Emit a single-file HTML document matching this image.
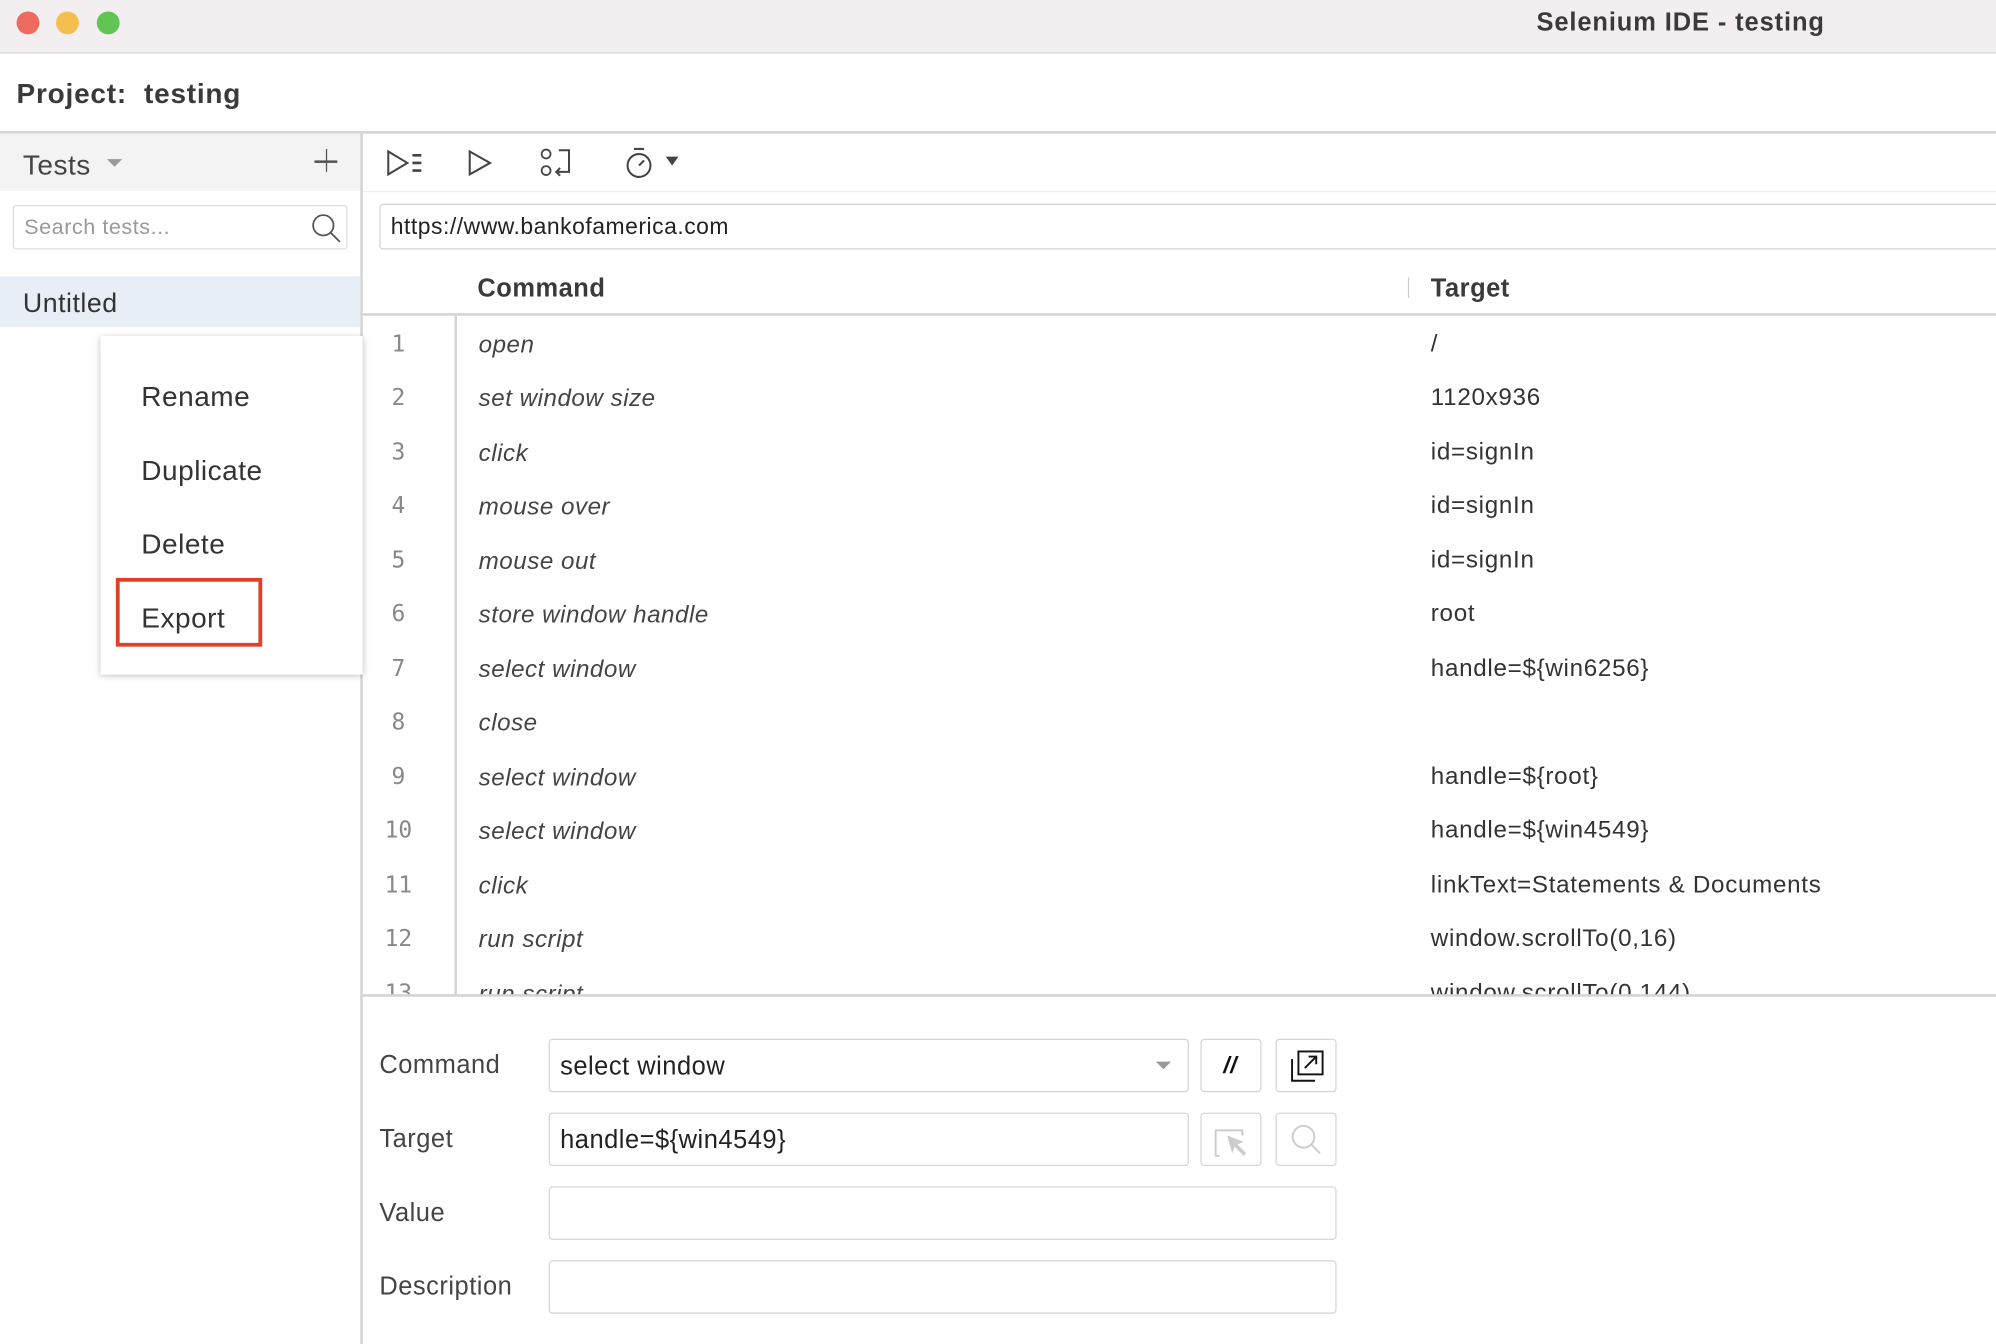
<!DOCTYPE html>
<html><head><meta charset="utf-8"><style>
html,body{margin:0;padding:0;width:1996px;height:1344px;overflow:hidden;background:#fff}
#w{position:absolute;left:0;top:0;width:1568px;height:1056px;transform:scale(1.27296);transform-origin:0 0;font-family:"Liberation Sans",sans-serif;color:#333;letter-spacing:0.4px}
.a{position:absolute}
.row{position:absolute;left:284px;width:1284px;height:42.5px;font-size:19px}
.row .n{position:absolute;left:0;width:58px;text-align:center;font-family:"DejaVu Sans Mono","Liberation Mono",monospace;color:#888;font-size:18px;top:11px;letter-spacing:0}
.row .c{position:absolute;left:92px;font-style:italic;top:12px;color:#444}
.row .t{position:absolute;left:840px;top:11px;color:#333;letter-spacing:0.55px}
.lbl{position:absolute;left:298px;font-size:20px;color:#444}
.inp{position:absolute;border:1.5px solid #d6d6d6;border-radius:3px;box-sizing:border-box;background:#fff;font-size:20px;padding:10px 8px 8px;color:#222}
.btn{position:absolute;border:1.5px solid #d6d6d6;border-radius:3px;box-sizing:border-box;width:48px;height:42px}
.mi{position:absolute;left:32px;font-size:22px;color:#333}
</style></head><body><div id="w">
<div class="a" style="left:0;top:0;width:1568px;height:41px;background:#f3eff1;border-bottom:1px solid #d8d4d6"></div>
<div class="a" style="left:13px;top:9px;width:18px;height:18px;border-radius:50%;background:#ec6a5e"></div>
<div class="a" style="left:44px;top:9px;width:18px;height:18px;border-radius:50%;background:#f4bf4f"></div>
<div class="a" style="left:76px;top:9px;width:18px;height:18px;border-radius:50%;background:#61c554"></div>
<div class="a" style="left:1207px;top:7px;font-size:20px;font-weight:bold;color:#3a3a3a;letter-spacing:0.7px">Selenium IDE - testing</div>
<div class="a" style="left:13px;top:61px;font-size:22px;font-weight:bold;color:#3a3a3a;letter-spacing:0.6px">Project:&nbsp; testing</div>
<div class="a" style="left:0;top:103px;width:1568px;height:2px;background:#d4d4d4"></div>
<div class="a" style="left:0;top:105px;width:283px;height:45px;background:#f3f3f3"></div>
<div class="a" style="left:283px;top:105px;width:2px;height:951px;background:#d4d4d4"></div>
<div class="a" style="left:18px;top:117px;font-size:22px;color:#444">Tests</div>
<div class="a" style="left:84px;top:125px;width:0;height:0;border-left:6px solid transparent;border-right:6px solid transparent;border-top:6px solid #999"></div>
<div class="a" style="left:247px;top:126px;width:18px;height:1.5px;background:#555"></div>
<div class="a" style="left:255.5px;top:117px;width:1.5px;height:18px;background:#555"></div>
<div class="a" style="left:10px;top:161px;width:263px;height:35px;border:1.5px solid #ddd;border-radius:3px;box-sizing:border-box"></div>
<div class="a" style="left:19px;top:169px;font-size:17px;color:#999">Search tests...</div>
<svg class="a" style="left:243px;top:166px" width="26" height="26" viewBox="0 0 26 26"><circle cx="11" cy="11" r="8" fill="none" stroke="#555" stroke-width="1.4"/><line x1="17" y1="17" x2="24" y2="24" stroke="#555" stroke-width="1.4"/></svg>
<div class="a" style="left:0;top:217px;width:283px;height:40px;background:#e8eef6"></div>
<div class="a" style="left:18px;top:227px;font-size:21px;color:#333">Untitled</div>
<div class="a" style="left:285px;top:150px;width:1283px;height:1px;background:#eee"></div>
<svg class="a" style="left:300px;top:114px" width="260" height="28" viewBox="0 0 260 28">
<path d="M5 5 L5 23 L20 14 Z" fill="none" stroke="#444" stroke-width="1.6"/><path d="M24 8h7M24 14h7M24 20h7" stroke="#444" stroke-width="2"/>
<path d="M69 5 L69 23 L85 14 Z" fill="none" stroke="#444" stroke-width="1.6"/>
<circle cx="129" cy="7" r="3.5" fill="none" stroke="#444" stroke-width="1.4"/><circle cx="129" cy="20" r="3.5" fill="none" stroke="#444" stroke-width="1.4"/>
<path d="M139 4h8v17h-10M140 18l-3 3 3 3" fill="none" stroke="#444" stroke-width="1.6"/>
<circle cx="202" cy="16" r="9" fill="none" stroke="#444" stroke-width="1.6"/><path d="M198 3h8M202 16l4-4" stroke="#444" stroke-width="1.6"/>
<path d="M223 9h10l-5 7z" fill="#444"/></svg>
<div class="inp" style="left:298px;top:160px;width:1280px;height:36px;font-size:18px;padding:7px 8px">https://www.bankofamerica.com</div>
<div class="a" style="left:375px;top:216px;font-size:20px;font-weight:bold;color:#3a3a3a">Command</div>
<div class="a" style="left:1106px;top:218px;width:1px;height:16px;background:#ccc"></div>
<div class="a" style="left:1124px;top:216px;font-size:20px;font-weight:bold;color:#3a3a3a">Target</div>
<div class="a" style="left:285px;top:246px;width:1283px;height:2px;background:#d4d4d4"></div>
<div class="a" style="left:357px;top:248px;width:2px;height:534px;background:#d4d4d4"></div>
<div class="a" style="left:285px;top:248px;width:1283px;height:534px;overflow:hidden">
<div style="position:absolute;left:-285px;top:-248px;width:1568px">
<div class="row" style="top:249px"><span class="n">1</span><span class="c">open</span><span class="t">/</span></div>
<div class="row" style="top:291px"><span class="n">2</span><span class="c">set window size</span><span class="t">1120x936</span></div>
<div class="row" style="top:334px"><span class="n">3</span><span class="c">click</span><span class="t">id=signIn</span></div>
<div class="row" style="top:376px"><span class="n">4</span><span class="c">mouse over</span><span class="t">id=signIn</span></div>
<div class="row" style="top:419px"><span class="n">5</span><span class="c">mouse out</span><span class="t">id=signIn</span></div>
<div class="row" style="top:461px"><span class="n">6</span><span class="c">store window handle</span><span class="t">root</span></div>
<div class="row" style="top:504px"><span class="n">7</span><span class="c">select window</span><span class="t">handle=${win6256}</span></div>
<div class="row" style="top:546px"><span class="n">8</span><span class="c">close</span><span class="t"></span></div>
<div class="row" style="top:589px"><span class="n">9</span><span class="c">select window</span><span class="t">handle=${root}</span></div>
<div class="row" style="top:631px"><span class="n">10</span><span class="c">select window</span><span class="t">handle=${win4549}</span></div>
<div class="row" style="top:674px"><span class="n">11</span><span class="c">click</span><span class="t">linkText=Statements &amp; Documents</span></div>
<div class="row" style="top:716px"><span class="n">12</span><span class="c">run script</span><span class="t">window.scrollTo(0,16)</span></div>
<div class="row" style="top:759px"><span class="n">13</span><span class="c">run script</span><span class="t">window.scrollTo(0,144)</span></div>
</div></div>
<div class="a" style="left:285px;top:781px;width:1283px;height:2px;background:#d4d4d4"></div>
<div class="lbl" style="top:826px">Command</div>
<div class="lbl" style="top:884px">Target</div>
<div class="lbl" style="top:942px">Value</div>
<div class="lbl" style="top:1000px">Description</div>
<div class="inp" style="left:431px;top:816px;width:503px;height:42px">select window</div>
<div class="a" style="left:908px;top:834px;border-left:6px solid transparent;border-right:6px solid transparent;border-top:6px solid #999"></div>
<div class="inp" style="left:431px;top:874px;width:503px;height:42px">handle=${win4549}</div>
<div class="inp" style="left:431px;top:932px;width:619px;height:42px"></div>
<div class="inp" style="left:431px;top:990px;width:619px;height:42px"></div>
<div class="btn" style="left:943px;top:816px"><div style="position:absolute;left:17px;top:10px;font-size:18px;font-style:italic;font-weight:bold;color:#111">//</div></div>
<div class="btn" style="left:1002px;top:816px"><svg width="46" height="40" viewBox="0 0 46 40"><rect x="17" y="9" width="19" height="18" fill="none" stroke="#111" stroke-width="1.5"/><path d="M12 15v17h18" fill="none" stroke="#111" stroke-width="1.5"/><path d="M22 22l9-9M25 13h6v6" fill="none" stroke="#111" stroke-width="1.5"/></svg></div>
<div class="btn" style="left:943px;top:874px"><svg width="46" height="40" viewBox="0 0 46 40"><path d="M14 33h-3v-20h21v4" fill="none" stroke="#ccc" stroke-width="1.5"/><path d="M20 17l13 5-5 2 7 7-2 2-7-7-2 5z" fill="#ccc"/></svg></div>
<div class="btn" style="left:1002px;top:874px"><svg width="46" height="40" viewBox="0 0 46 40"><circle cx="21" cy="18" r="8.5" fill="none" stroke="#ccc" stroke-width="1.5"/><line x1="27" y1="24" x2="34" y2="31" stroke="#ccc" stroke-width="1.5"/></svg></div>
<div class="a" style="left:79px;top:264px;width:206px;height:266px;background:#fff;box-shadow:0 1px 5px rgba(0,0,0,0.25)">
<div class="mi" style="top:35px">Rename</div>
<div class="mi" style="top:93px">Duplicate</div>
<div class="mi" style="top:151px">Delete</div>
<div class="mi" style="top:209px">Export</div>
<div class="a" style="left:12px;top:190px;width:115px;height:54px;border:3px solid #e0402a;box-sizing:border-box"></div>
</div>
</div></body></html>
